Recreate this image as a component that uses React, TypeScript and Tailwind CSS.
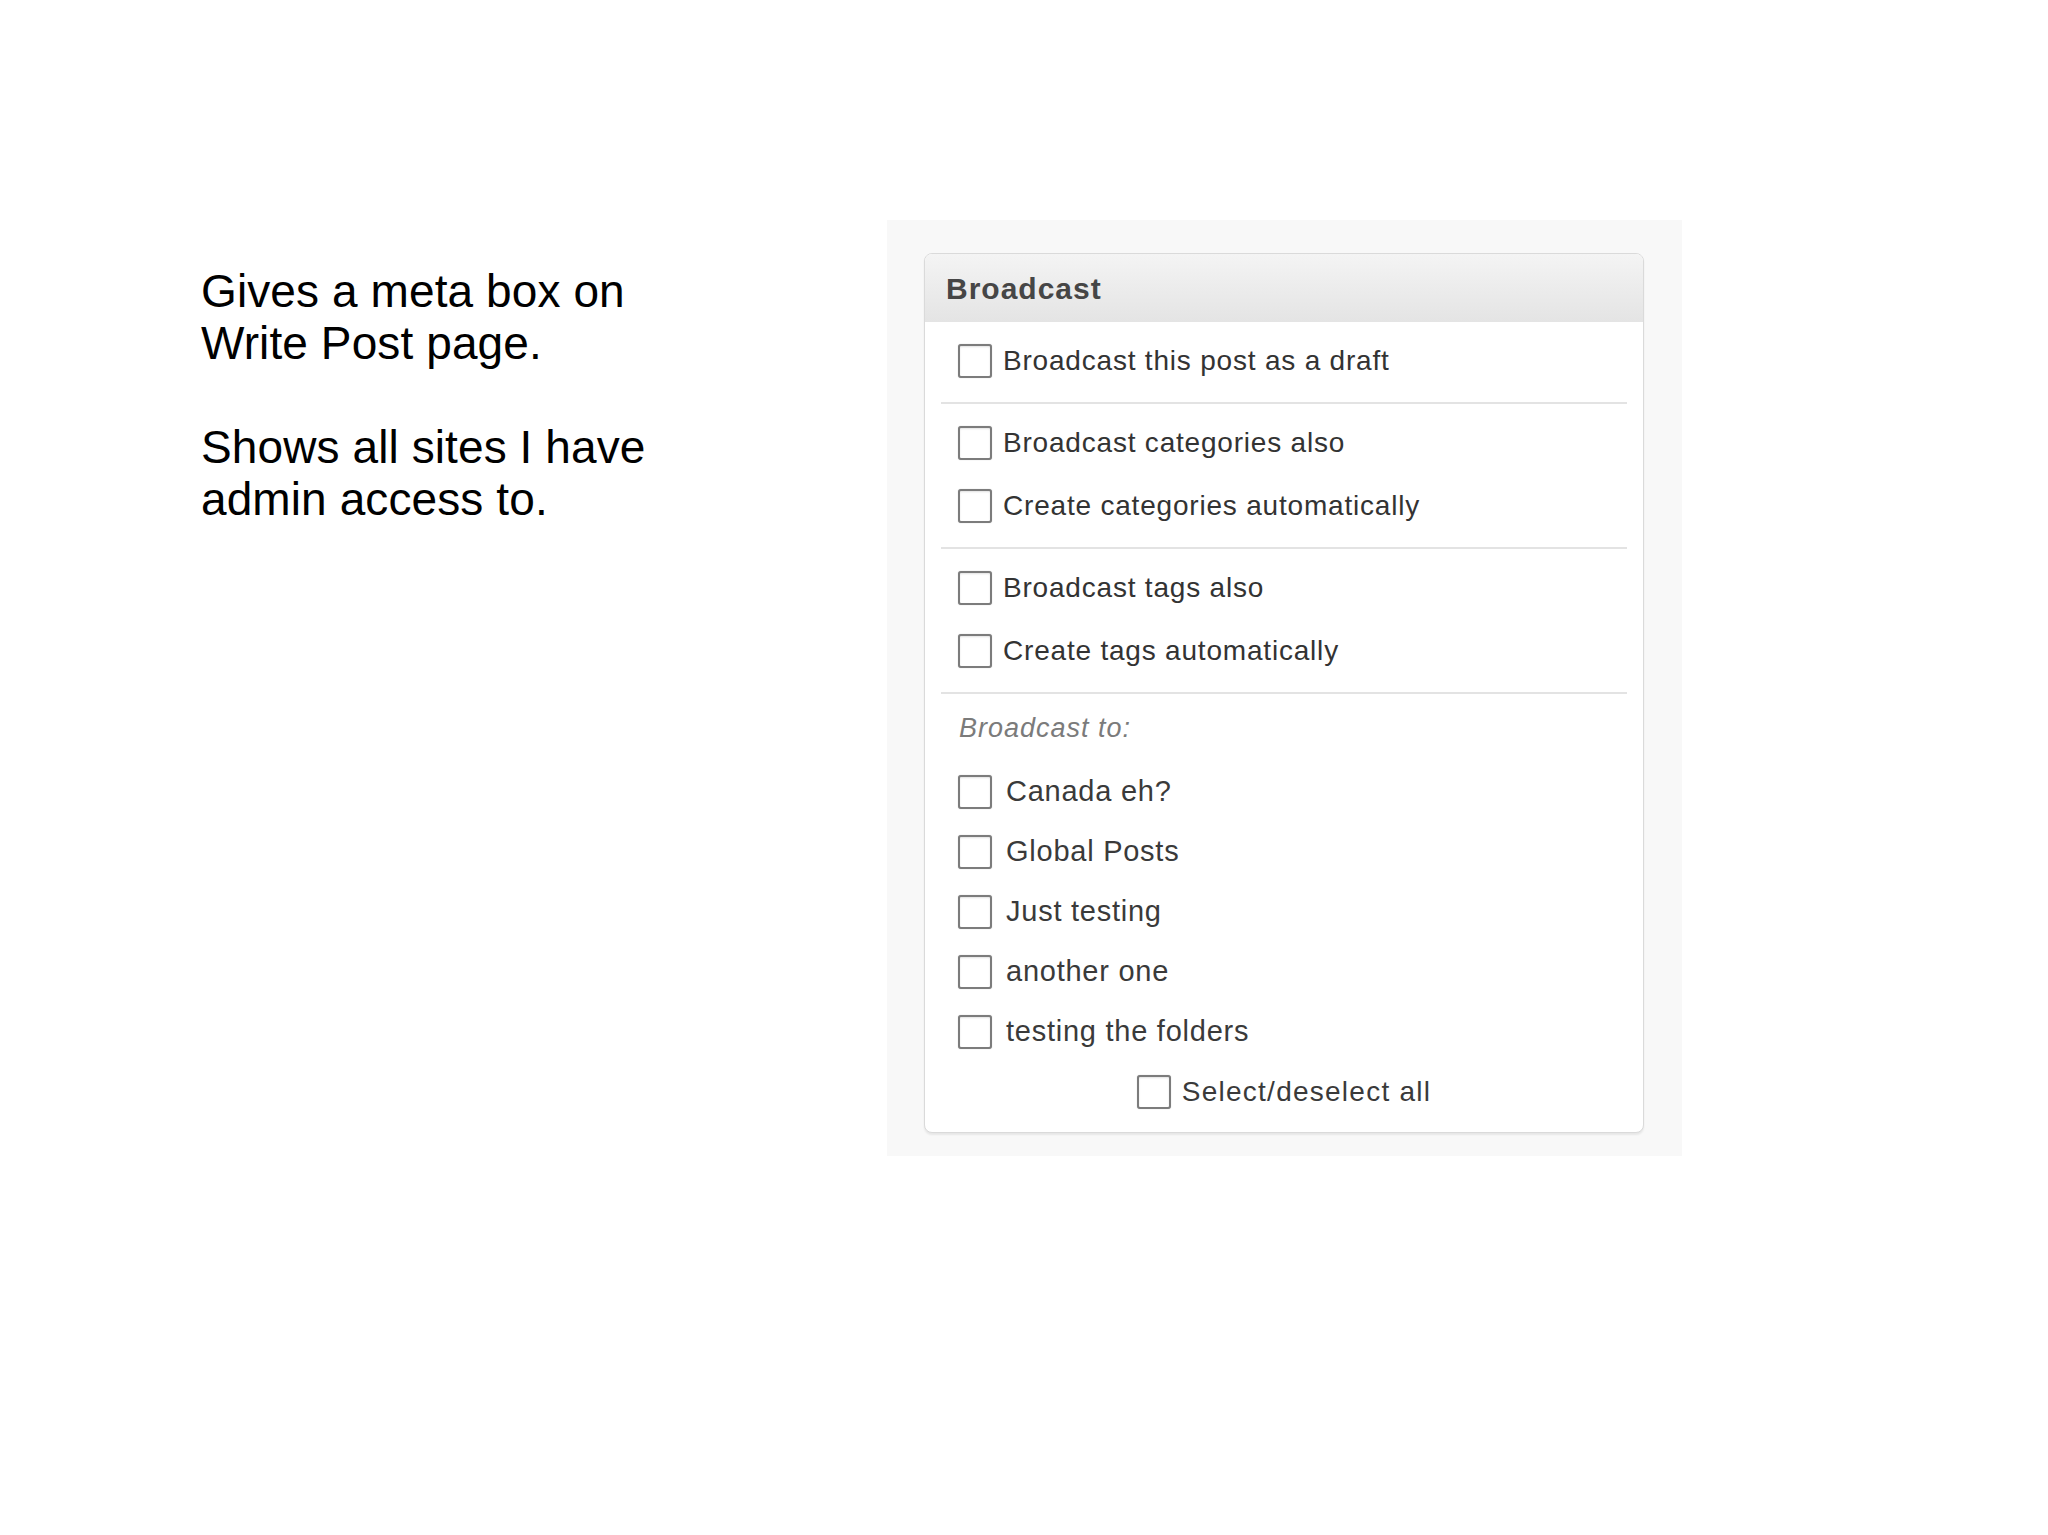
import React from "react";

const options = [
  ["Broadcast this post as a draft"],
  ["Broadcast categories also", "Create categories automatically"],
  ["Broadcast tags also", "Create tags automatically"],
];

const sites = ["Canada eh?", "Global Posts", "Just testing", "another one", "testing the folders"];

function Box() {
  return (
    <span className="block h-[34px] w-[34px] shrink-0 rounded-[3px] border-2 border-[#7c7c7c] bg-white shadow-[inset_0_1px_2px_rgba(0,0,0,0.12),0_0_1px_rgba(0,0,0,0.3)]" />
  );
}

function Option({ label }: { label: string }) {
  return (
    <label className="flex h-[63px] items-center gap-[11px] pl-[33px]">
      <Box />
      <span className="text-[28px] tracking-[0.8px] text-[#333333]">{label}</span>
    </label>
  );
}

export default function App() {
  return (
    <div className="min-h-screen bg-white" style={{ fontFamily: '"Liberation Sans", Arial, sans-serif' }}>
      <div className="flex pl-[201px] pt-[220px]">
        {/* Notes */}
        <div className="w-[686px] shrink-0 pt-[45px] text-[46px] leading-[52px] tracking-[0.1px] text-black">
          <p>
            Gives a meta box on
            <br />
            Write Post page.
          </p>
          <p className="mt-[52px]">
            Shows all sites I have
            <br />
            admin access to.
          </p>
        </div>

        {/* Screenshot of the meta box */}
        <div className="w-[795px] shrink-0 bg-[#f8f8f8] pb-[23px] pl-[37px] pr-[38px] pt-[33px]">
          <div className="overflow-hidden rounded-[8px] border border-[#dadada] bg-white shadow-[0_2px_2px_rgba(0,0,0,0.07)]">
            <div className="flex h-[68px] items-center bg-gradient-to-b from-[#f4f4f4] to-[#e4e4e4] pl-[21px]">
              <span className="text-[30px] font-bold tracking-[1px] text-[#464646]">Broadcast</span>
            </div>

            <div className="pb-[10px]">
              {options.map((group, i) => (
                <div key={i}>
                  <div className="pb-[10px] pt-[7px]">
                    {group.map((o) => (
                      <Option key={o} label={o} />
                    ))}
                  </div>
                  <div className="mx-4 h-[2px] bg-[#e3e3e3]" />
                </div>
              ))}

              <p className="pl-[34px] pt-[19px] pb-[19px] text-[27px] italic leading-[30px] tracking-[1px] text-[#7b7b7b]">
                Broadcast to:
              </p>

              {sites.map((s) => (
                <label key={s} className="flex h-[60px] items-center gap-[14px] pl-[33px]">
                  <Box />
                  <span className="text-[29px] tracking-[0.75px] text-[#3a3a3a]">{s}</span>
                </label>
              ))}

              <label className="flex h-[60px] items-center justify-center gap-[11px]">
                <Box />
                <span className="text-[28px] tracking-[1.25px] text-[#3a3a3a]">Select/deselect all</span>
              </label>
            </div>
          </div>
        </div>
      </div>
    </div>
  );
}
